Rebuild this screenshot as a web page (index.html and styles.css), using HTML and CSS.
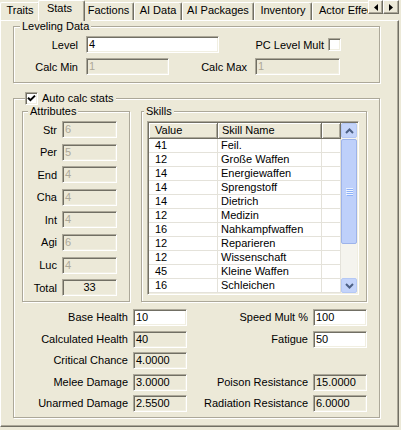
FILE: index.html
```html
<!DOCTYPE html>
<html>
<head>
<meta charset="utf-8">
<link rel="stylesheet" href="styles.css">
</head>
<body>
<div class="tabstrip">
  <div class="tablist">
    <div class="tab t-traits">Traits</div>
    <div class="tab t-stats active">Stats</div>
    <div class="tab t-factions">Factions</div>
    <div class="tab t-aidata">AI Data</div>
    <div class="tab t-aipack">AI Packages</div>
    <div class="tab t-inv">Inventory</div>
    <div class="tab t-actor">Actor Effects</div>
  </div>
  <div class="tabarrows">
    <div class="arrowbtn a-left"><svg width="4" height="7" viewBox="0 0 4 7"><polygon points="4,0 0,3.5 4,7" fill="#000"/></svg></div>
    <div class="arrowbtn a-right"><svg width="4" height="7" viewBox="0 0 4 7"><polygon points="0,0 4,3.5 0,7" fill="#000"/></svg></div>
  </div>
</div>
<div class="panel">
  <div class="group lev">
    <div class="gtitle lev-title">Leveling Data</div>
    <div class="row row1">
      <div class="lbl w64">Level</div>
      <div class="inp w133">4</div>
      <div class="lbl w105">PC Level Mult</div>
      <div class="chk"></div>
    </div>
    <div class="row row2">
      <div class="lbl w64">Calc Min</div>
      <div class="inp dis w83">1</div>
      <div class="lbl w78">Calc Max</div>
      <div class="inp dis w85">1</div>
    </div>
  </div>

  <div class="group auto">
    <div class="gtitle auto-title">
      <div class="chk"><svg width="11" height="11" viewBox="0 0 11 11"><path d="M2 4.8 L4.4 7.2 L9 2.6" fill="none" stroke="#000" stroke-width="2"/></svg></div>
      <span class="auto-text">Auto calc stats</span>
    </div>
    <div class="autobody">
      <div class="group attr">
        <div class="gtitle attr-title">Attributes</div>
        <div class="attrrows">
          <div class="row"><div class="lbl w34">Str</div><div class="inp dis w55">6</div></div>
          <div class="row"><div class="lbl w34">Per</div><div class="inp dis w55">5</div></div>
          <div class="row"><div class="lbl w34">End</div><div class="inp dis w55">4</div></div>
          <div class="row"><div class="lbl w34">Cha</div><div class="inp dis w55">4</div></div>
          <div class="row"><div class="lbl w34">Int</div><div class="inp dis w55">4</div></div>
          <div class="row"><div class="lbl w34">Agi</div><div class="inp dis w55">6</div></div>
          <div class="row"><div class="lbl w34">Luc</div><div class="inp dis w55">4</div></div>
          <div class="row"><div class="lbl w34">Total</div><div class="inp ro w55 center">33</div></div>
        </div>
      </div>
      <div class="group skills">
        <div class="gtitle skills-title">Skills</div>
        <div class="lv">
          <div class="lvmain">
            <div class="lvhead">
              <div class="hc c1">Value</div>
              <div class="hc c2">Skill Name</div>
              <div class="hc c3"></div>
            </div>
            <div class="lvrow"><div class="cell c1">41</div><div class="cell c2">Feil.</div><div class="cell c3"></div></div>
            <div class="lvrow"><div class="cell c1">12</div><div class="cell c2">Große Waffen</div><div class="cell c3"></div></div>
            <div class="lvrow"><div class="cell c1">14</div><div class="cell c2">Energiewaffen</div><div class="cell c3"></div></div>
            <div class="lvrow"><div class="cell c1">14</div><div class="cell c2">Sprengstoff</div><div class="cell c3"></div></div>
            <div class="lvrow"><div class="cell c1">14</div><div class="cell c2">Dietrich</div><div class="cell c3"></div></div>
            <div class="lvrow"><div class="cell c1">12</div><div class="cell c2">Medizin</div><div class="cell c3"></div></div>
            <div class="lvrow"><div class="cell c1">16</div><div class="cell c2">Nahkampfwaffen</div><div class="cell c3"></div></div>
            <div class="lvrow"><div class="cell c1">12</div><div class="cell c2">Reparieren</div><div class="cell c3"></div></div>
            <div class="lvrow"><div class="cell c1">12</div><div class="cell c2">Wissenschaft</div><div class="cell c3"></div></div>
            <div class="lvrow"><div class="cell c1">45</div><div class="cell c2">Kleine Waffen</div><div class="cell c3"></div></div>
            <div class="lvrow"><div class="cell c1">16</div><div class="cell c2">Schleichen</div><div class="cell c3"></div></div>
          </div>
          <div class="sb">
            <div class="sbbtn"><svg width="9" height="6" viewBox="0 0 9 6"><path d="M1 5 L4.5 1.5 L8 5" fill="none" stroke="#4D6185" stroke-width="2"/></svg></div>
            <div class="thumb"><svg width="7" height="8" viewBox="0 0 7 8"><g fill="none" stroke-width="1"><path d="M0 0.5H7M0 2.5H7M0 4.5H7M0 6.5H7" stroke="#EEF4FE"/><path d="M1 1.5H7M1 3.5H7M1 5.5H7M1 7.5H7" stroke="#8CB0F8"/></g></svg></div>
            <div class="sbtrack"></div>
            <div class="sbbtn"><svg width="9" height="6" viewBox="0 0 9 6"><path d="M1 1 L4.5 4.5 L8 1" fill="none" stroke="#4D6185" stroke-width="2"/></svg></div>
          </div>
        </div>
      </div>
    </div>
    <div class="statsgrid">
      <div class="glbl">Base Health</div><div class="inp">10</div>
      <div class="glbl">Speed Mult %</div><div class="inp">100</div>
      <div class="glbl">Calculated Health</div><div class="inp ro">40</div>
      <div class="glbl">Fatigue</div><div class="inp">50</div>
      <div class="glbl">Critical Chance</div><div class="inp ro">4.0000</div>
      <div></div><div></div>
      <div class="glbl">Melee Damage</div><div class="inp ro">3.0000</div>
      <div class="glbl">Poison Resistance</div><div class="inp ro">15.0000</div>
      <div class="glbl">Unarmed Damage</div><div class="inp ro">2.5500</div>
      <div class="glbl">Radiation Resistance</div><div class="inp ro">6.0000</div>
    </div>
  </div>
</div>
</body>
</html>
```

FILE: styles.css
```css
body {
  margin: 0;
  width: 401px;
  height: 430px;
  overflow: hidden;
  background: #ECE9D8;
  font-family: "Liberation Sans", Arial, sans-serif;
  font-size: 11px;
  color: #000;
}

/* tabs */
.tabstrip {
  display: flex;
  height: 21px;
  margin-bottom: -1px;
}
.tablist {
  display: flex;
  align-items: flex-start;
  width: 368px;
  flex: none;
  overflow: hidden;
}
.tab {
  flex: none;
  box-sizing: border-box;
  height: 18px;
  margin-top: 2px;
  border-left: 1px solid #fff;
  border-top: 1px solid #fff;
  border-right: 1px solid #716F64;
  box-shadow: inset -1px 0 #ACA899;
  border-radius: 2px 2px 0 0;
  background: #ECE9D8;
  text-align: center;
  line-height: 15px;
  white-space: nowrap;
}
.t-traits { width: 40px; }
.t-stats { width: 43px; }
.t-factions { width: 51px; }
.t-aidata { width: 48px; }
.t-aipack { width: 72px; }
.t-inv { width: 58px; }
.t-actor { width: 72px; text-align: left; padding-left: 6px; }
.tab.active {
  width: 47px;
  height: 21px;
  margin: 0 -2px;
  padding-right: 4px;
  line-height: 14px;
  z-index: 2;
}
.tabarrows {
  display: flex;
  align-self: flex-start;
}
.arrowbtn {
  box-sizing: border-box;
  height: 14px;
  border: 1px solid;
  border-color: #fff #716F64 #716F64 #fff;
  box-shadow: inset -1px -1px #ACA899;
  background: #ECE9D8;
  display: flex;
  align-items: center;
  justify-content: center;
}
.a-left { width: 15px; }
.a-right { width: 16px; }

/* panel */
.panel {
  box-sizing: border-box;
  width: 399px;
  height: 407px;
  border-top: 1px solid #fff;
  border-left: 1px solid #fff;
  border-right: 1px solid #716F64;
  border-bottom: 1px solid #716F64;
  box-shadow: inset -1px -1px #ACA899;
  padding: 5px 0 0 12px;
}

.group {
  box-sizing: border-box;
  border: 1px solid #ACA899;
  box-shadow: inset 1px 1px #fff, 1px 1px #fff;
}
.gtitle {
  display: flex;
  align-items: center;
  width: max-content;
  height: 13px;
  line-height: 13px;
  margin-top: -7px;
  padding: 0 2px;
  background: #ECE9D8;
  white-space: nowrap;
}
.lev-title { margin-left: 6px; }
.auto-title { margin-left: 11px; padding-left: 0; }
.attr-title { margin-left: 5px; }
.skills-title { margin-left: 2px; }

.row {
  display: flex;
  align-items: center;
}
.lbl {
  flex: none;
  text-align: right;
  white-space: nowrap;
}
.w64 { width: 64px; margin-right: 8px; }
.w105 { width: 105px; margin-right: 4px; }
.w78 { width: 78px; margin-right: 8px; }
.w34 { width: 34px; margin-right: 5px; }

.inp {
  box-sizing: border-box;
  flex: none;
  height: 17px;
  border: 1px solid;
  border-color: #ACA899 #fff #fff #ACA899;
  box-shadow: inset 1px 1px #716F64, inset -1px -1px #F1EFE2;
  background: #fff;
  padding-left: 2px;
  line-height: 15px;
  white-space: nowrap;
  overflow: hidden;
}
.inp.dis { background: #ECE9D8; color: #ACA899; }
.inp.ro { background: #ECE9D8; }
.inp.center { text-align: center; padding-left: 0; }
.w133 { width: 133px; }
.w83 { width: 83px; }
.w85 { width: 85px; }
.w55 { width: 55px; }

.chk {
  box-sizing: border-box;
  flex: none;
  width: 13px;
  height: 13px;
  border: 1px solid;
  border-color: #ACA899 #fff #fff #ACA899;
  box-shadow: inset 1px 1px #716F64, inset -1px -1px #F1EFE2;
  background: #fff;
  display: flex;
}

/* leveling group */
.lev { width: 367px; height: 57px; }
.row1 { margin-top: 3px; }
.row2 { margin-top: 5px; }

/* auto calc group */
.auto { width: 367px; height: 320px; margin-top: 15px; }
.auto-text { margin-left: 4px; }
.autobody {
  display: flex;
  gap: 11px;
  padding-left: 8px;
  margin-top: 6px;
}
.attr { width: 108px; height: 191px; }
.attrrows {
  display: flex;
  flex-direction: column;
  gap: 5.6px;
  margin-top: 3px;
}
.skills { width: 226px; height: 191px; }

/* list view */
.lv {
  box-sizing: border-box;
  width: 212px;
  height: 174px;
  margin: 3px 0 0 5px;
  border: 1px solid;
  border-color: #ACA899 #fff #fff #ACA899;
  box-shadow: inset 1px 1px #716F64, inset -1px -1px #F1EFE2;
  padding: 1px;
  display: flex;
  background: #fff;
}
.lvmain {
  flex: 1;
  overflow: hidden;
}
.lvhead {
  display: flex;
  height: 16px;
}
.hc {
  box-sizing: border-box;
  height: 16px;
  background: #ECE9D8;
  border-right: 1px solid #716F64;
  border-bottom: 1px solid #716F64;
  box-shadow: inset 1px 1px #fff, inset -1px -1px #ACA899;
  line-height: 15px;
  white-space: nowrap;
}
.c1 { width: 69px; padding-left: 6px; }
.c2 { width: 104px; padding-left: 4px; }
.c3 { flex: 1; }
.lvrow {
  display: flex;
  height: 14px;
}
.cell {
  box-sizing: border-box;
  height: 14px;
  line-height: 13px;
  border-bottom: 1px solid #E4E2DA;
  border-right: 1px solid #E4E2DA;
  white-space: nowrap;
  overflow: hidden;
}
.cell.c2 { padding-left: 3px; }

.sb {
  width: 16px;
  flex: none;
  display: flex;
  flex-direction: column;
  background: #F5F4EE;
}
.sbbtn {
  box-sizing: border-box;
  height: 15px;
  border: 1px solid #B5C8F4;
  border-radius: 2px;
  background: #C4D4FA;
  display: flex;
  align-items: center;
  justify-content: center;
}
.thumb {
  box-sizing: border-box;
  height: 105px;
  margin-top: 1px;
  border: 1px solid #9DB3EA;
  border-radius: 2px;
  background: #BED0FA;
  display: flex;
  align-items: center;
  justify-content: center;
}
.sbtrack { flex: 1; }

/* bottom stats */
.statsgrid {
  display: grid;
  grid-template-columns: 119px 54px 126px 54px;
  grid-template-rows: repeat(5, 17px);
  row-gap: 4.5px;
  margin-top: 7px;
}
.glbl {
  text-align: right;
  padding-right: 5px;
  line-height: 17px;
  white-space: nowrap;
}
```
